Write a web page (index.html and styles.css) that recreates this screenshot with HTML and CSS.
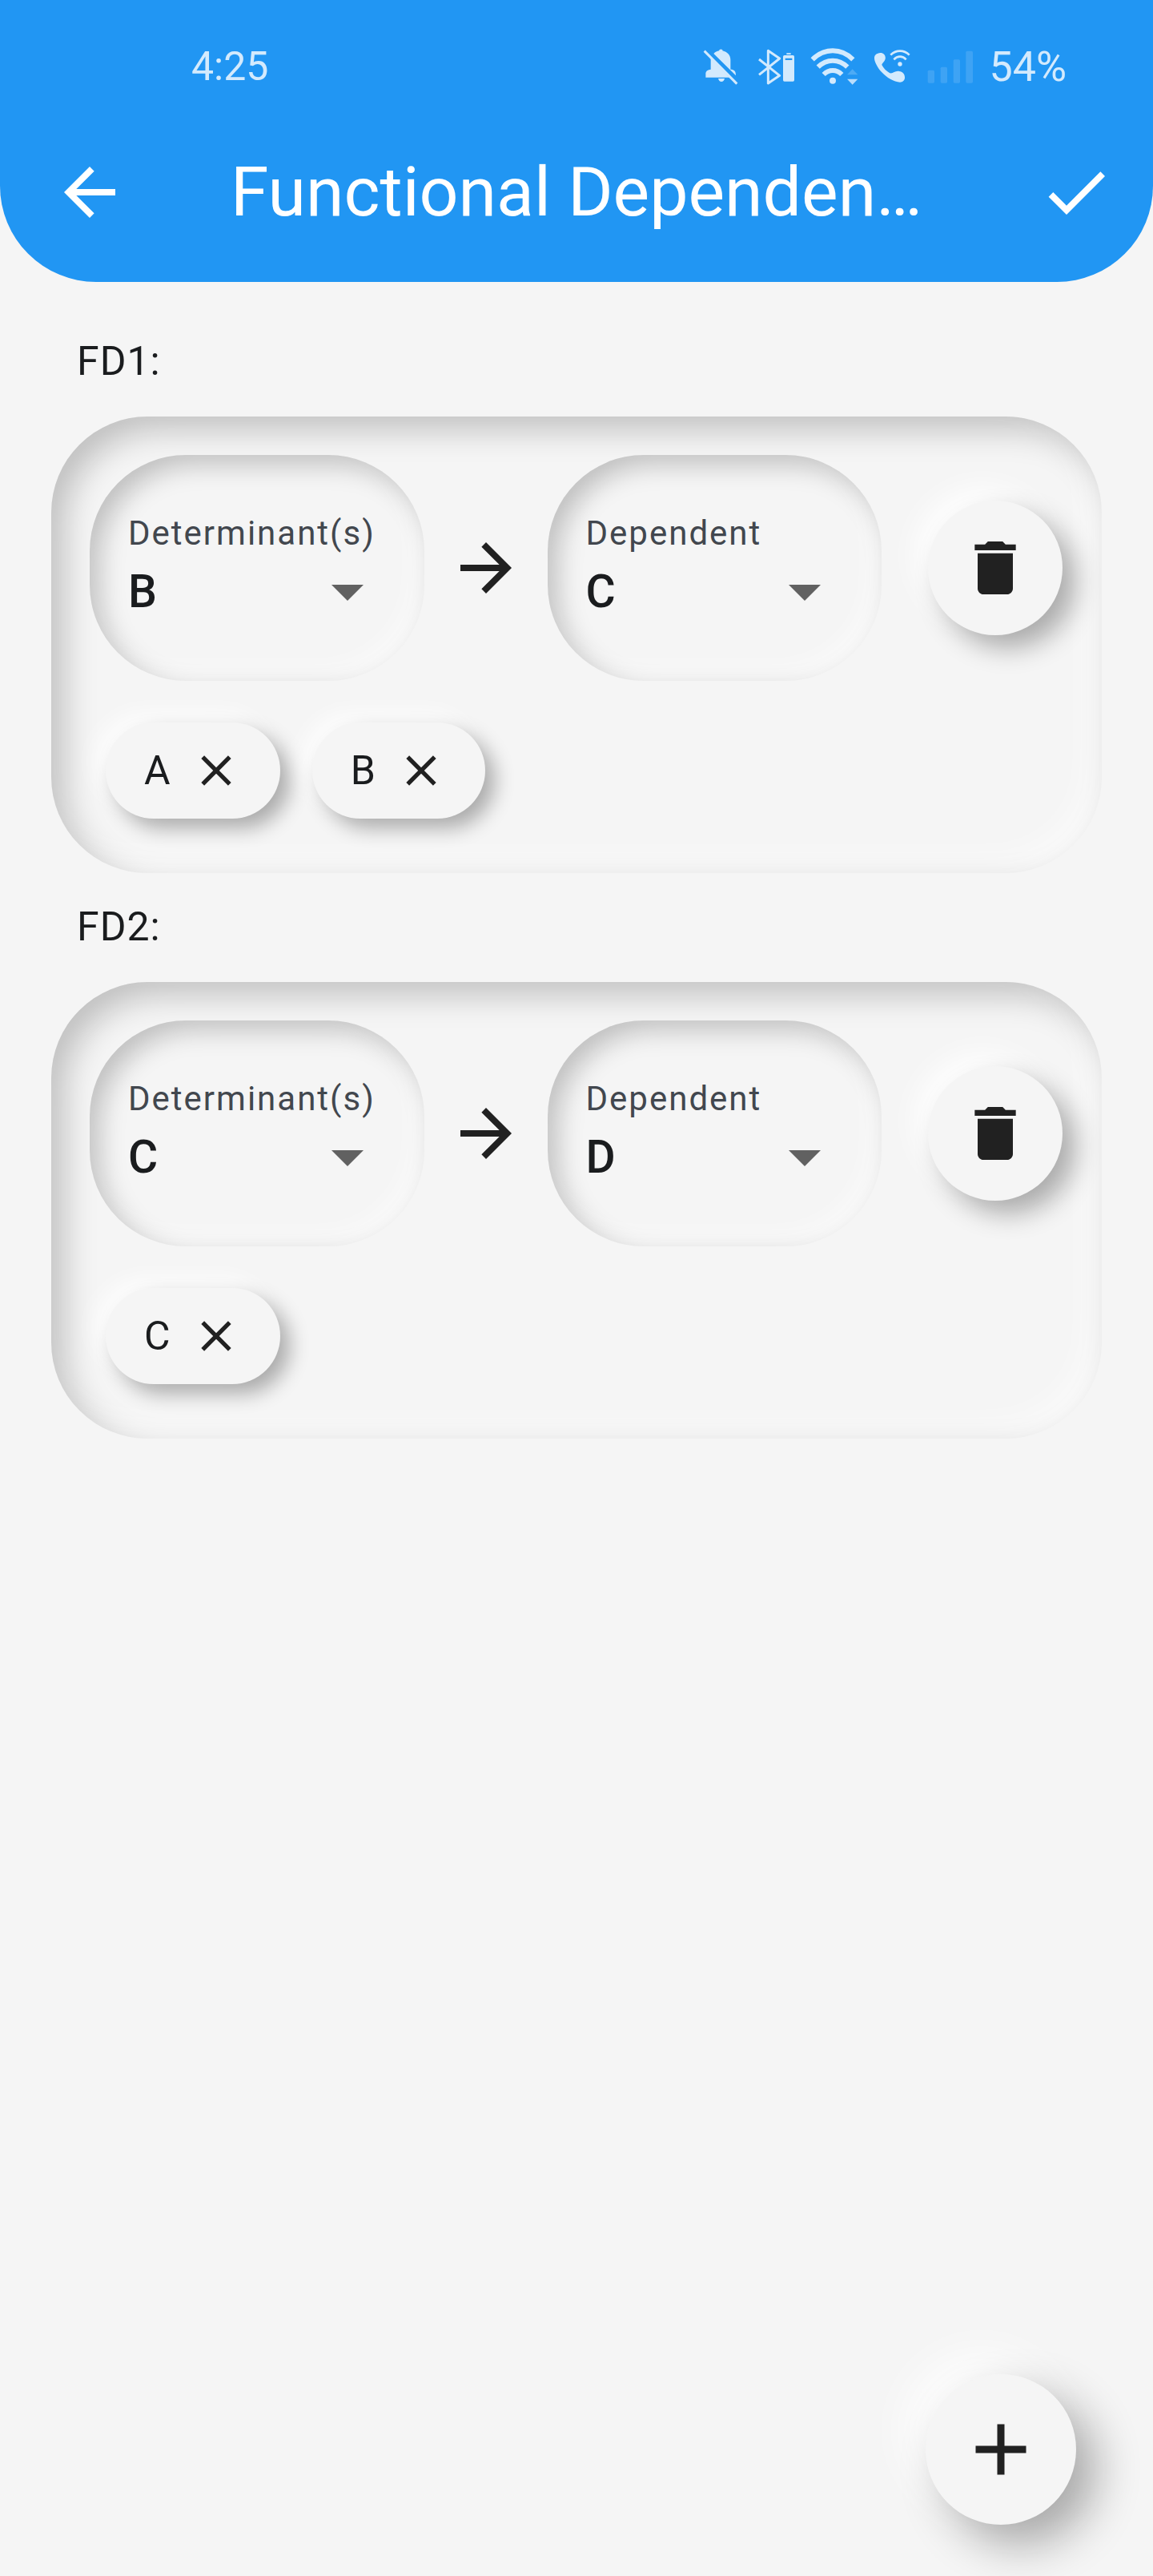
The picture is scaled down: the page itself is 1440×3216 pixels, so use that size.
FILE: index.html
```html
<!DOCTYPE html>
<html lang="en">
<head>
<meta charset="utf-8">
<meta name="viewport" content="width=device-width, initial-scale=1">
<title>Functional Dependencies</title>
<link rel="stylesheet" href="styles.css">
</head>
<body>
<header class="app-header">
  <div class="status-bar">
    <span class="status-time">4:25</span>
    <div class="status-icons">
      <svg class="status-bell" viewBox="54 52 150 144" aria-hidden="true">
        <path fill="currentColor" d="M97 76C102 70 110 67 118 65V62q6-5 12 0v3c18 4 30 17 30 34v36c14 0 20 6 20 23zM86 93l70 72H67v-14c0-10 8-15 19-16zM114 169h24q-3 12-12 12t-12-12z"/>
        <path stroke="currentColor" stroke-width="9" d="M62 66L184 189"/>
      </svg>
      <svg class="status-bluetooth" viewBox="258 52 144 144" aria-hidden="true">
        <path fill="none" stroke="currentColor" stroke-width="9" stroke-linejoin="round" d="M267 97L344 158L301 187V65L344 94L267 155"/>
        <path fill="currentColor" d="M370 74h16v5h-16zM362 82h32q5 0 5 5v88q0 5-5 5h-32q-5 0-5-5V87q0-5 5-5zm3 11v7h26v-7z" fill-rule="evenodd"/>
      </svg>
      <svg class="status-wifi" viewBox="456 52 186 144" aria-hidden="true">
        <g fill="none" stroke="currentColor" stroke-width="18"><path d="M467 98Q500 65 543 65T619 98"/><path d="M488 126Q512 102 543 102T598 126"/><path d="M509 154Q524 139 543 139T577 154"/></g>
        <circle fill="currentColor" cx="543" cy="177" r="12"/>
        <path fill="currentColor" opacity=".25" d="M597 155l20-21 20 21z"/>
        <path fill="currentColor" opacity=".85" d="M597 171h40l-20 21z"/>
      </svg>
      <svg class="status-call" viewBox="696 52 144 144" aria-hidden="true">
        <path fill="currentColor" d="M712 75c12-5 26 0 28 13 3 15-12 22-13 30 6 13 18 24 30 31 12 3 19-10 35-7 14 1 22 12 21 25 0 9-8 16-18 16-22 0-51-18-68-37-18-20-32-47-27-60 1-5 6-9 12-11z"/>
        <g fill="none" stroke="currentColor" stroke-width="8"><path d="M760 81Q775 66 795 66T830 81"/><path d="M772 98Q782 87 795 87T818 98"/></g>
        <circle fill="currentColor" cx="795" cy="115" r="8"/>
      </svg>
      <svg class="status-signal" viewBox="894 52 180 144" aria-hidden="true">
        <g fill="currentColor" opacity=".16"><rect x="899" y="138" width="25" height="48" rx="5"/><rect x="947" y="126" width="25" height="60" rx="5"/><rect x="995" y="98" width="25" height="88" rx="5"/><rect x="1042" y="66" width="26" height="120" rx="5"/></g>
      </svg>
      <span class="status-battery">54%</span>
    </div>
  </div>
  <div class="toolbar">
    <button class="icon-button" type="button" aria-label="Back">
      <svg class="icon" viewBox="0 0 24 24" aria-hidden="true"><path d="M20 11H7.83l5.59-5.59L12 4l-8 8 8 8 1.41-1.41L7.83 13H20v-2z"/></svg>
    </button>
    <h1 class="toolbar-title">Functional Dependen…</h1>
    <button class="icon-button" type="button" aria-label="Done">
      <svg class="icon" viewBox="0 0 24 24" aria-hidden="true"><path d="M9 16.17L4.83 12l-1.42 1.41L9 19 21 7l-1.41-1.41z"/></svg>
    </button>
  </div>
</header>

<main class="dependency-list">
  <section class="dependency">
    <h2 class="dependency-name">FD1:</h2>
    <div class="card">
      <div class="rule">
        <div class="field">
          <label class="field-label" for="fd1-determinant">Determinant(s)</label>
          <div class="picker">
            <select class="picker-select" id="fd1-determinant"><option>B</option></select>
            <svg class="picker-caret" viewBox="0 0 24 24" aria-hidden="true"><path d="M7 10l5 5 5-5z"/></svg>
          </div>
        </div>
        <svg class="icon" viewBox="0 0 24 24" aria-hidden="true"><path d="M12 4l-1.41 1.41L16.17 11H4v2h12.17l-5.58 5.59L12 20l8-8z"/></svg>
        <div class="field">
          <label class="field-label" for="fd1-dependent">Dependent</label>
          <div class="picker">
            <select class="picker-select" id="fd1-dependent"><option>C</option></select>
            <svg class="picker-caret" viewBox="0 0 24 24" aria-hidden="true"><path d="M7 10l5 5 5-5z"/></svg>
          </div>
        </div>
        <button class="delete-button" type="button" aria-label="Delete FD1">
          <svg class="delete-icon" viewBox="0 0 24 24" aria-hidden="true"><path d="M6 19c0 1.1.9 2 2 2h8c1.1 0 2-.9 2-2V7H6v12zM19 4h-3.5l-1-1h-5l-1 1H5v2h14V4z"/></svg>
        </button>
      </div>
      <div class="chips">
        <button class="chip" type="button">A<svg class="chip-icon" viewBox="0 0 24 24" aria-hidden="true"><path d="M19 6.41L17.59 5 12 10.59 6.41 5 5 6.41 10.59 12 5 17.59 6.41 19 12 13.41 17.59 19 19 17.59 13.41 12z"/></svg></button>
        <button class="chip" type="button">B<svg class="chip-icon" viewBox="0 0 24 24" aria-hidden="true"><path d="M19 6.41L17.59 5 12 10.59 6.41 5 5 6.41 10.59 12 5 17.59 6.41 19 12 13.41 17.59 19 19 17.59 13.41 12z"/></svg></button>
      </div>
    </div>
  </section>

  <section class="dependency">
    <h2 class="dependency-name">FD2:</h2>
    <div class="card">
      <div class="rule">
        <div class="field">
          <label class="field-label" for="fd2-determinant">Determinant(s)</label>
          <div class="picker">
            <select class="picker-select" id="fd2-determinant"><option>C</option></select>
            <svg class="picker-caret" viewBox="0 0 24 24" aria-hidden="true"><path d="M7 10l5 5 5-5z"/></svg>
          </div>
        </div>
        <svg class="icon" viewBox="0 0 24 24" aria-hidden="true"><path d="M12 4l-1.41 1.41L16.17 11H4v2h12.17l-5.58 5.59L12 20l8-8z"/></svg>
        <div class="field">
          <label class="field-label" for="fd2-dependent">Dependent</label>
          <div class="picker">
            <select class="picker-select" id="fd2-dependent"><option>D</option></select>
            <svg class="picker-caret" viewBox="0 0 24 24" aria-hidden="true"><path d="M7 10l5 5 5-5z"/></svg>
          </div>
        </div>
        <button class="delete-button" type="button" aria-label="Delete FD2">
          <svg class="delete-icon" viewBox="0 0 24 24" aria-hidden="true"><path d="M6 19c0 1.1.9 2 2 2h8c1.1 0 2-.9 2-2V7H6v12zM19 4h-3.5l-1-1h-5l-1 1H5v2h14V4z"/></svg>
        </button>
      </div>
      <div class="chips">
        <button class="chip" type="button">C<svg class="chip-icon" viewBox="0 0 24 24" aria-hidden="true"><path d="M19 6.41L17.59 5 12 10.59 6.41 5 5 6.41 10.59 12 5 17.59 6.41 19 12 13.41 17.59 19 19 17.59 13.41 12z"/></svg></button>
      </div>
    </div>
  </section>
</main>

<button class="add-button" type="button" aria-label="Add dependency">
  <svg class="add-icon" viewBox="0 0 24 24" aria-hidden="true"><path d="M19 13h-6v6h-2v-6H5v-2h6V5h2v6h6v2z"/></svg>
</button>
</body>
</html>
```
FILE: styles.css
```css
* {
  box-sizing: border-box;
}

body {
  margin: 0;
  min-height: 100vh;
  background: #f5f5f5;
  color: #1a1c1e;
  font-family: Roboto, sans-serif;
}

button,
select {
  margin: 0;
  padding: 0;
  border: 0;
  background: none;
  color: inherit;
  font: inherit;
}

svg {
  display: block;
  flex: none;
}

/* Header */

.app-header {
  background: #2196f3;
  color: #fff;
  border-radius: 0 0 120px 120px;
}

.status-bar {
  display: flex;
  align-items: center;
  justify-content: space-between;
  height: 128px;
  padding: 38px 108px 0 239px;
  color: #d3eafd;
}

.status-time {
  font-size: 50px;
}

.status-battery {
  font-size: 52px;
}

.status-icons {
  display: flex;
  align-items: center;
  gap: 18px;
}

.status-icons svg {
  height: 48px;
}

.status-bell {
  width: 50px;
}

.status-bluetooth,
.status-call {
  width: 48px;
}

.status-wifi {
  width: 62px;
}

.status-signal {
  width: 60px;
}

.toolbar {
  display: flex;
  align-items: center;
  height: 224px;
  padding: 0 48px 0 64px;
}

.icon-button {
  flex: none;
}

.toolbar-title {
  flex: 1;
  min-width: 0;
  margin: 0;
  padding: 0 0 2px 128px;
  font-size: 86px;
  font-weight: 400;
  white-space: nowrap;
}

.icon {
  width: 96px;
  height: 96px;
  fill: currentColor;
}

/* Dependencies */

.dependency-list {
  padding: 32px 64px 0;
}

.dependency-name {
  margin: 0;
  padding: 37px 32px 39px;
  font-size: 50px;
  font-weight: 400;
  line-height: 60px;
  letter-spacing: 1px;
}

.card {
  padding: 48px;
  border-radius: 120px;
  box-shadow:
    inset 16px 16px 40px rgba(0, 0, 0, 0.22),
    inset -16px -16px 40px rgba(255, 255, 255, 0.6);
}

.rule {
  display: flex;
  align-items: center;
  gap: 29px;
  padding-right: 1px;
  color: #212121;
}

.field {
  flex: 1;
  min-width: 0;
  padding: 74px 48px 64px;
  border-radius: 120px;
  background: #f5f5f5;
  box-shadow:
    inset 12px 12px 32px rgba(0, 0, 0, 0.22),
    inset -12px -12px 32px rgba(255, 255, 255, 0.6);
}

.field-label {
  display: block;
  color: #42474e;
  font-size: 42px;
  line-height: 48px;
  letter-spacing: 2px;
  white-space: nowrap;
}

.picker {
  display: grid;
  align-items: center;
}

.picker-select,
.picker-caret {
  grid-area: 1 / 1;
}

.picker-select {
  appearance: none;
  width: 100%;
  height: 96px;
  color: #1a1c1e;
  font-size: 57px;
  font-weight: 500;
}

.picker-caret {
  width: 96px;
  height: 96px;
  justify-self: end;
  fill: #616161;
  pointer-events: none;
}

.delete-button,
.add-button {
  display: grid;
  place-items: center;
  flex: none;
  padding: 40px;
  border-radius: 50%;
  background: #f5f5f5;
  color: #212121;
}

.delete-button {
  margin-left: 29px;
  box-shadow:
    16px 16px 32px rgba(0, 0, 0, 0.3),
    -16px -16px 36px rgba(255, 255, 255, 0.9);
}

.delete-icon {
  width: 88px;
  height: 88px;
  fill: currentColor;
}

/* Selected attributes */

.chips {
  display: flex;
  flex-wrap: wrap;
  gap: 40px;
  padding: 52px 20px 20px;
}

.chip {
  display: flex;
  align-items: center;
  gap: 24px;
  height: 120px;
  padding: 0 48px;
  border-radius: 60px;
  background: #f5f5f5;
  box-shadow:
    12px 12px 24px rgba(0, 0, 0, 0.3),
    -12px -12px 28px rgba(255, 255, 255, 0.8);
  font-size: 50px;
  letter-spacing: 1px;
}

.chip-icon {
  width: 64px;
  height: 64px;
  fill: #212121;
}

/* Floating action */

.add-button {
  position: fixed;
  right: 96px;
  bottom: 64px;
  box-shadow:
    24px 24px 56px rgba(0, 0, 0, 0.32),
    -24px -24px 56px rgba(255, 255, 255, 0.9);
}

.add-icon {
  width: 108px;
  height: 108px;
  fill: currentColor;
}
```
